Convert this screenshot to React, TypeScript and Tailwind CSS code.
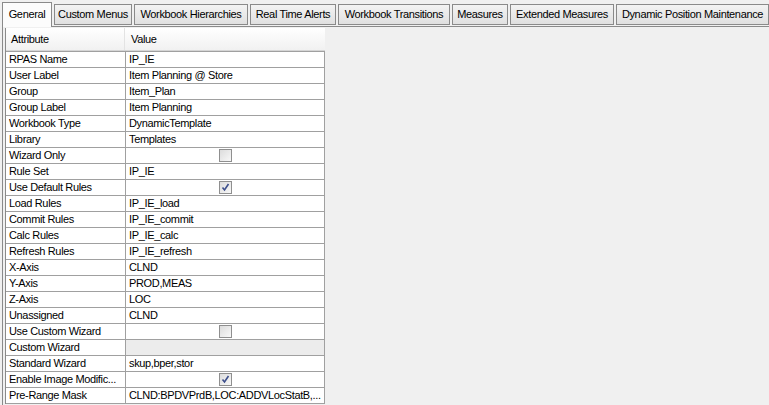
import React from "react";

type Row = { label: string; value?: string; check?: boolean; disabled?: boolean };

const TABS = [
  { name: "General", w: 50 },
  { name: "Custom Menus", w: 78 },
  { name: "Workbook Hierarchies", w: 114 },
  { name: "Real Time Alerts", w: 86 },
  { name: "Workbook Transitions", w: 112 },
  { name: "Measures", w: 56 },
  { name: "Extended Measures", w: 104 },
  { name: "Dynamic Position Maintenance", w: 153 },
];

const ROWS: Row[] = [
  { label: "RPAS Name", value: "IP_IE" },
  { label: "User Label", value: "Item Planning @ Store" },
  { label: "Group", value: "Item_Plan" },
  { label: "Group Label", value: "Item Planning" },
  { label: "Workbook Type", value: "DynamicTemplate" },
  { label: "Library", value: "Templates" },
  { label: "Wizard Only", check: false },
  { label: "Rule Set", value: "IP_IE" },
  { label: "Use Default Rules", check: true },
  { label: "Load Rules", value: "IP_IE_load" },
  { label: "Commit Rules", value: "IP_IE_commit" },
  { label: "Calc Rules", value: "IP_IE_calc" },
  { label: "Refresh Rules", value: "IP_IE_refresh" },
  { label: "X-Axis", value: "CLND" },
  { label: "Y-Axis", value: "PROD,MEAS" },
  { label: "Z-Axis", value: "LOC" },
  { label: "Unassigned", value: "CLND" },
  { label: "Use Custom Wizard", check: false },
  { label: "Custom Wizard", value: "", disabled: true },
  { label: "Standard Wizard", value: "skup,bper,stor" },
  { label: "Enable Image Modific...", check: true },
  { label: "Pre-Range Mask", value: "CLND:BPDVPrdB,LOC:ADDVLocStatB,..." },
];

function CheckBox({ checked }: { checked: boolean }) {
  return (
    <div className="w-[13px] h-[13px] border border-[#8f8f8f] bg-gradient-to-br from-[#dcdcdc] to-[#f8f8f8] flex items-center justify-center">
      {checked && (
        <svg width="9" height="9" viewBox="0 0 9 9">
          <path d="M1.5 4.5 L3.5 7 L7.5 1" fill="none" stroke="#3d4f8c" strokeWidth="1.6" />
        </svg>
      )}
    </div>
  );
}

export default function App() {
  return (
    <div
      className="w-[769px] h-[405px] bg-[#f0f0f0] overflow-hidden text-[11px] tracking-[-0.35px] text-black"
      style={{ fontFamily: '"Liberation Sans", Arial, sans-serif' }}
    >
      {/* tab strip */}
      <div className="flex items-end h-[26px] pl-[2px] gap-[2px]">
        {TABS.map((t, i) =>
          i === 0 ? (
            <div
              key={t.name}
              className="h-[25px] -mb-px z-10 bg-[#fcfcfc] border border-b-0 border-[#8a8a8a] flex items-center justify-center pb-[2px] whitespace-nowrap"
              style={{ width: t.w }}
            >
              {t.name}
            </div>
          ) : (
            <div
              key={t.name}
              className="h-[21px] mb-[1px] bg-gradient-to-b from-[#f3f3f3] to-[#e0e0e0] border border-[#8a8a8a] flex items-center justify-center whitespace-nowrap"
              style={{ width: t.w }}
            >
              {t.name}
            </div>
          )
        )}
      </div>

      {/* panel */}
      <div className="ml-[2px] h-[379px] border-l border-t border-[#8a8a8a] pl-[2px] pt-px">
        <div className="w-[320px] border-l border-[#8a8a8a]">
          <div className="flex h-[23px] bg-gradient-to-b from-white to-[#f1f1f1] border-b border-[#d5d5d5]">
            <div className="w-[119px] pl-[5px] flex items-center border-r border-[#e3e3e3]">Attribute</div>
            <div className="flex-1 pl-[6px] flex items-center">Value</div>
          </div>
          {ROWS.map((r) => (
            <div key={r.label} className="flex h-4 border-t border-[#a0a0a0]">
              <div className="w-[120px] pl-[3px] bg-white border-r border-[#a0a0a0] flex items-center whitespace-nowrap overflow-hidden">
                {r.label}
              </div>
              <div
                className={
                  "flex-1 border-r border-[#a0a0a0] flex items-center whitespace-nowrap overflow-hidden " +
                  (r.check !== undefined ? "justify-center " : "pl-[3px] ") +
                  (r.disabled ? "bg-[#ececec]" : "bg-white")
                }
              >
                {r.check !== undefined ? <CheckBox checked={r.check} /> : r.value}
              </div>
            </div>
          ))}
          <div className="border-t border-[#a0a0a0]" />
        </div>
      </div>
    </div>
  );
}
